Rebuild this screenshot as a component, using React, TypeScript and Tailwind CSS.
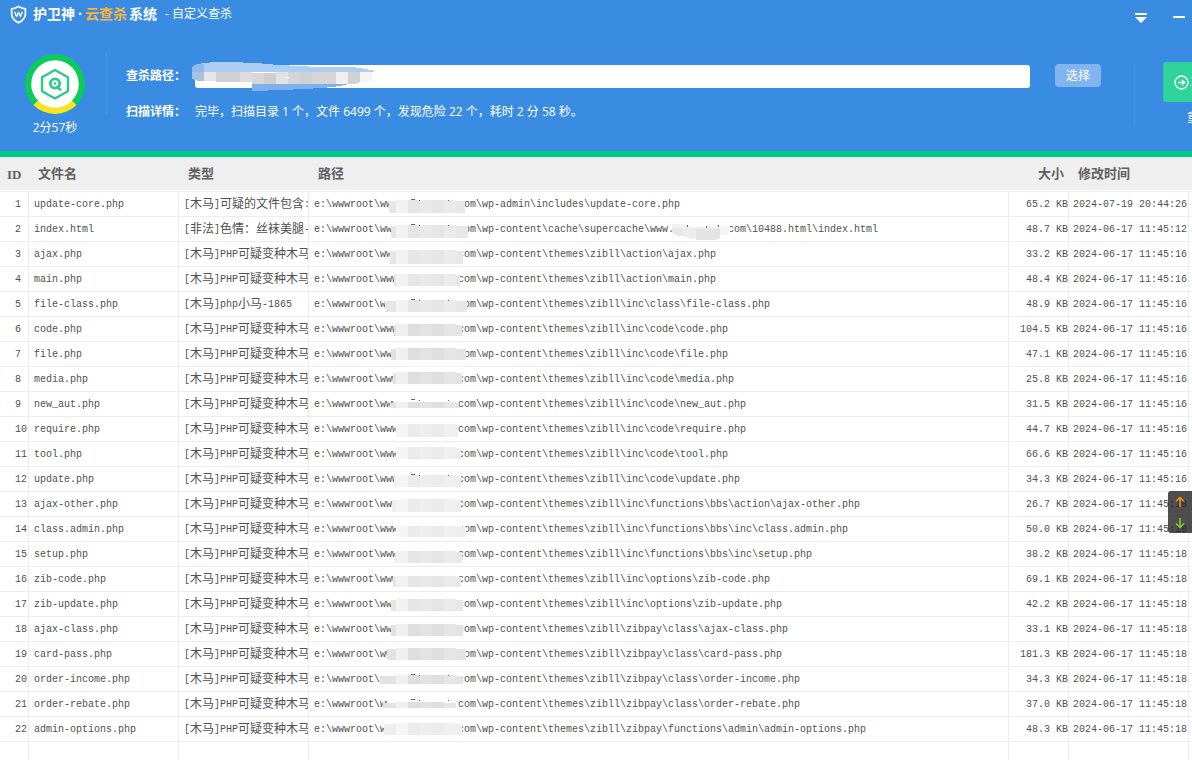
import { Fragment } from "react";

type Blur = {
  x0: number;
  x1: number;
  y0: number;
  y1: number;
  tone: "light" | "mid" | "dark";
  ticks?: boolean;
};

type Threat = {
  name: string;
  type: string;
  path: string;
  size: string;
  time: string;
  blur: Blur;
};

const VARIANT = "[木马]PHP可疑变种木马";
const THEME = "\\wp-content\\themes\\zibll\\";

const threats: Threat[] = [
  { name: "update-core.php", type: "[木马]可疑的文件包含:", path: "\\wp-admin\\includes\\update-core.php", size: "65.2 KB", time: "2024-07-19 20:44:26", blur: { x0: 389, x1: 465, y0: 8, y1: 21, tone: "mid", ticks: true } },
  { name: "index.html", type: "[非法]色情：丝袜美腿-", path: "\\wp-content\\cache\\supercache\\www.|com\\10488.html\\index.html", size: "48.7 KB", time: "2024-06-17 11:45:12", blur: { x0: 391, x1: 468, y0: 8, y1: 21, tone: "mid", ticks: true } },
  { name: "ajax.php", type: VARIANT, path: THEME + "action\\ajax.php", size: "33.2 KB", time: "2024-06-17 11:45:16", blur: { x0: 390, x1: 463, y0: 8, y1: 22, tone: "mid" } },
  { name: "main.php", type: VARIANT, path: THEME + "action\\main.php", size: "48.4 KB", time: "2024-06-17 11:45:16", blur: { x0: 394, x1: 460, y0: 7, y1: 19, tone: "mid" } },
  { name: "file-class.php", type: "[木马]php小马-1865", path: THEME + "inc\\class\\file-class.php", size: "48.9 KB", time: "2024-06-17 11:45:16", blur: { x0: 385, x1: 467, y0: 8, y1: 20, tone: "mid", ticks: true } },
  { name: "code.php", type: VARIANT, path: THEME + "inc\\code\\code.php", size: "104.5 KB", time: "2024-06-17 11:45:16", blur: { x0: 394, x1: 462, y0: 7, y1: 19, tone: "dark" } },
  { name: "file.php", type: VARIANT, path: THEME + "inc\\code\\file.php", size: "47.1 KB", time: "2024-06-17 11:45:16", blur: { x0: 391, x1: 466, y0: 6, y1: 18, tone: "dark" } },
  { name: "media.php", type: VARIANT, path: THEME + "inc\\code\\media.php", size: "25.8 KB", time: "2024-06-17 11:45:16", blur: { x0: 393, x1: 462, y0: 5, y1: 17, tone: "dark" } },
  { name: "new_aut.php", type: VARIANT, path: THEME + "inc\\code\\new_aut.php", size: "31.5 KB", time: "2024-06-17 11:45:16", blur: { x0: 390, x1: 459, y0: 10, y1: 16, tone: "dark", ticks: true } },
  { name: "require.php", type: VARIANT, path: THEME + "inc\\code\\require.php", size: "44.7 KB", time: "2024-06-17 11:45:16", blur: { x0: 396, x1: 458, y0: 7, y1: 20, tone: "light" } },
  { name: "tool.php", type: VARIANT, path: THEME + "inc\\code\\tool.php", size: "66.6 KB", time: "2024-06-17 11:45:16", blur: { x0: 396, x1: 461, y0: 5, y1: 17, tone: "light" } },
  { name: "update.php", type: VARIANT, path: THEME + "inc\\code\\update.php", size: "34.3 KB", time: "2024-06-17 11:45:16", blur: { x0: 394, x1: 461, y0: 8, y1: 20, tone: "light", ticks: true } },
  { name: "ajax-other.php", type: VARIANT, path: THEME + "inc\\functions\\bbs\\action\\ajax-other.php", size: "26.7 KB", time: "2024-06-17 11:45:18", blur: { x0: 392, x1: 461, y0: 7, y1: 20, tone: "light" } },
  { name: "class.admin.php", type: VARIANT, path: THEME + "inc\\functions\\bbs\\inc\\class.admin.php", size: "50.0 KB", time: "2024-06-17 11:45:18", blur: { x0: 396, x1: 466, y0: 9, y1: 20, tone: "light" } },
  { name: "setup.php", type: VARIANT, path: THEME + "inc\\functions\\bbs\\inc\\setup.php", size: "38.2 KB", time: "2024-06-17 11:45:18", blur: { x0: 395, x1: 462, y0: 9, y1: 21, tone: "mid" } },
  { name: "zib-code.php", type: VARIANT, path: THEME + "inc\\options\\zib-code.php", size: "69.1 KB", time: "2024-06-17 11:45:18", blur: { x0: 393, x1: 461, y0: 9, y1: 20, tone: "mid" } },
  { name: "zib-update.php", type: VARIANT, path: THEME + "inc\\options\\zib-update.php", size: "42.2 KB", time: "2024-06-17 11:45:18", blur: { x0: 391, x1: 463, y0: 7, y1: 19, tone: "mid" } },
  { name: "ajax-class.php", type: VARIANT, path: THEME + "zibpay\\class\\ajax-class.php", size: "33.1 KB", time: "2024-06-17 11:45:18", blur: { x0: 391, x1: 463, y0: 7, y1: 19, tone: "dark" } },
  { name: "card-pass.php", type: VARIANT, path: THEME + "zibpay\\class\\card-pass.php", size: "181.3 KB", time: "2024-06-17 11:45:18", blur: { x0: 387, x1: 466, y0: 6, y1: 18, tone: "dark" } },
  { name: "order-income.php", type: VARIANT, path: THEME + "zibpay\\class\\order-income.php", size: "34.3 KB", time: "2024-06-17 11:45:18", blur: { x0: 380, x1: 463, y0: 8, y1: 17, tone: "dark", ticks: true } },
  { name: "order-rebate.php", type: VARIANT, path: THEME + "zibpay\\class\\order-rebate.php", size: "37.0 KB", time: "2024-06-17 11:45:18", blur: { x0: 383, x1: 456, y0: 10, y1: 16, tone: "dark", ticks: true } },
  { name: "admin-options.php", type: VARIANT, path: THEME + "zibpay\\functions\\admin\\admin-options.php", size: "48.3 KB", time: "2024-06-17 11:45:18", blur: { x0: 384, x1: 462, y0: 6, y1: 18, tone: "light" } },
];

const tones = {
  light: ["#eeeeee", "#f5f5f5", "#ebebeb", "#eeeeee", "#ebebeb", "#f0f0f0", "#eeeeee", "#f4f4f4"],
  mid: ["#e6e6e6", "#f2f2f2", "#e6e6e6", "#e9e9e9", "#e5e5e5", "#ebebeb", "#e7e7e7", "#efefef"],
  dark: ["#e2e2e2", "#f0f0f0", "#dedede", "#e3e3e3", "#dfdfdf", "#e6e6e6", "#e3e3e3", "#ececec"],
};

// pixelated patch that hides the site's domain
const DomainBlur = ({ blur }: { blur: Blur }) => {
  const { x0, x1, y0, y1 } = blur;
  return (
    <span className="relative h-6 w-[60px] shrink-0">
      <svg className="absolute -left-5 top-0" width="92" height="24" viewBox="378 0 92 24" shapeRendering="crispEdges">
        <rect x={x0 + 4} y={y0 - 1} width={x1 - x0 - 8} height={y1 - y0 + 3} fill="#fdfdfd" />
        {tones[blur.tone].map((fill, i) => {
          const left = Math.max(x0, i === 0 ? 378 : 384 + i * 12);
          const right = Math.min(x1, 396 + i * 12);
          if (right <= left) return null;
          const edge = i === 0 || right === x1 ? 1 : 0;
          return <rect key={i} x={left} y={y0 + edge} width={right - left} height={y1 - y0 - edge} fill={fill} />;
        })}
        {blur.ticks && <path d="M411 7h4v1h-4zM419 8h1v1h-1zM448 8h1v1h-1z" fill="#666" />}
      </svg>
    </span>
  );
};

const CacheBlur = () => (
  <span className="relative h-6 w-[54px] shrink-0">
    <svg className="absolute -left-1 top-0" width="64" height="24" viewBox="670 0 64 24" shapeRendering="crispEdges">
      <path d="M672 7h10l8 3h32l-2 5h-48z" fill="#f0f0f0" />
      <path d="M672 11h12v8h-6l-6-3z" fill="#e8e8e8" />
      <path d="M684 11h12v11h-6l-6-3z" fill="#ededed" />
      <path d="M696 12h24v9l-4 2h-20z" fill="#e3e3e3" />
      <path d="M720 9h10v5l-4 4h-6z" fill="#f3f3f3" />
      <path d="M687 8h1v2h-1zM706 9h1v2h-1zM718 8h1v2h-1z" fill="#666" />
    </svg>
  </span>
);

// latin sits on a 6px grid, chinese on a 12px one
const MixedText = ({ text }: { text: string }) => (
  <div className="flex h-6 items-center">
    {text.split(/([\u3000-\u9fff\uff00-\uffef]+)/).map((part, i) =>
      i % 2 ? (
        <span key={i} className="shrink-0 pt-0.5 text-[12px] leading-4">
          {part}
        </span>
      ) : (
        <Fragment key={i}>{part}</Fragment>
      )
    )}
  </div>
);

const ShieldLogo = () => (
  <svg width="17" height="19" viewBox="0 0 17 19" fill="none" stroke="#fff" strokeLinejoin="round">
    <path d="M8.500 1.300C6.800 2.700 4.500 3.600 1.600 3.800v4.700c0 4.200 2.600 7.200 6.900 9.300 4.300-2.100 6.900-5.100 6.900-9.300V3.800C12.500 3.600 10.200 2.700 8.500 1.300z" strokeWidth="1.700" />
    <path d="M4.600 6.800l1.900 4.800 2-4.200 2 4.200 1.900-4.800" strokeWidth="1.300" />
  </svg>
);

const ScanRing = () => (
  <svg width="60" height="60" viewBox="0 0 60 60" fill="none">
    <circle cx="30" cy="30" r="30" fill="#0ccb5a" />
    <path d="M30 30L8.500 50.900A30 30 0 0 0 51.500 50.900z" fill="#fbe31d" />
    <circle cx="30" cy="30" r="23.800" fill="#fff" />
    <path d="M30 16l13 7.200v14L30 44.500l-13-7.300v-14z" stroke="#2fc987" strokeWidth="2.400" strokeLinejoin="round" />
    <circle cx="30" cy="29.500" r="4.700" stroke="#2fc987" strokeWidth="2.800" />
    <circle cx="30" cy="29.500" r="1.300" fill="#2fc987" />
    <path d="M31.500 32l4.300 4.300" stroke="#2fc987" strokeWidth="2.400" />
  </svg>
);

const PathBlur = () => (
  <svg className="pointer-events-none absolute -left-[3px] -top-[3px]" width="186" height="30" viewBox="192 62 186 30" shapeRendering="crispEdges">
    <path d="M192 67l5-3 7-1 12-1h20l14 1 23 1v1h17v1l38 1h24l14 2 9 2-3 1H204v6h-12z" fill="#accdf4" />
    <path d="M192 67l5-3h7v8h-12z" fill="#8bb9f0" />
    <path d="M192 72h12v9h-6l-6-2z" fill="#a9c0df" />
    <path d="M204 72h12v9h-12z" fill="#e6e6e6" />
    <path d="M216 72h24v10h-24z" fill="#d1d1d1" />
    <path d="M240 72h12v10h-12z" fill="#dcdcdc" />
    <path d="M252 73h12v11h-12z" fill="#d7d7d7" />
    <path d="M264 73h12v11h-12z" fill="#cfcfcf" />
    <path d="M276 72h12v12h-12z" fill="#e2e2e2" />
    <path d="M288 72h12v12h-12z" fill="#d5d5d5" />
    <path d="M300 72h12v12h-12z" fill="#d0d0d0" />
    <path d="M312 72h24v12h-24z" fill="#d6d6d6" />
    <path d="M336 72h12v12h-12z" fill="#efefef" />
    <path d="M348 72h12v10l-6 2h-6z" fill="#d1d1d1" />
    <path d="M360 72h12v8l-6 2h-6z" fill="#f5f5f5" />
    <path d="M252 84h97l-9 2-17 2-21 1-18 1-32 1z" fill="#7eb0ec" />
    <path d="M285 77h4v1h-4z" fill="#fff" />
  </svg>
);

const headCell = "h-[35px] border-b border-[#efefef] bg-[#efefef] pt-0.5 pb-0 text-left font-bold shadow-[inset_0_-1px_#fff]";
const bodyCell = "h-[25px] overflow-hidden whitespace-nowrap border-b border-r border-[#ededed] p-0";
const emptyCell = "h-[25px] border-r border-[#ededed] p-0";

export default function App() {
  return (
    <div className="relative flex h-screen flex-col overflow-hidden bg-white text-[12px] font-['Liberation_Mono','Noto_Sans_CJK_SC',monospace]">
      <header className="shrink-0 border-b-[6px] border-[#05ca85] bg-[#3a8ce2] text-white font-['Open_Sans','Noto_Sans_CJK_SC',sans-serif]">
        <div className="flex h-7 items-center pl-[10px] pr-[7px]">
          <ShieldLogo />
          <h1 className="ml-1.5 flex gap-px text-[14px] font-bold leading-5">
            <span>护卫神</span>
            <span className="flex w-2 justify-center">·</span>
            <span className="text-[#f9b43c]">云查杀</span>
            <span className="pl-px">系统</span>
          </h1>
          <span className="ml-2 leading-5">- 自定义查杀</span>
          <div className="ml-auto flex items-center gap-[26px] pt-2">
            <button aria-label="菜单">
              <svg width="12" height="10" viewBox="0 0 12 10" fill="#fff">
                <path d="M0 0h12v2H0zM0 4h12L6 10z" />
              </svg>
            </button>
            <button aria-label="最小化">
              <svg width="12" height="10" viewBox="0 0 12 10" fill="#fff">
                <path d="M0 3h12v2H0z" />
              </svg>
            </button>
          </div>
        </div>

        <div className="flex h-[123px] pl-[25px] pt-6">
          <div className="flex shrink-0 flex-col items-center pt-0.5">
            <ScanRing />
            <span className="mt-1 leading-5">2分57秒</span>
          </div>
          <div className="ml-[21px] h-[62px] w-px shrink-0 bg-[#4c97e5]" />

          <div className="ml-[19px] flex min-w-0 flex-1 flex-col pt-3">
            <div className="flex h-6 items-center">
              <label htmlFor="scan-path" className="w-[69px] shrink-0 font-bold">
                查杀路径：
              </label>
              <div className="relative mt-px min-w-0 flex-1">
                <input id="scan-path" type="text" className="block h-[23px] w-full rounded-[3px] bg-white px-2 text-[#666] outline-none" />
                <PathBlur />
              </div>
              <button className="ml-[25px] h-[23px] w-[46px] shrink-0 self-start rounded-[4px] bg-[#82b5ee] text-[12px]">选择</button>
            </div>
            <div className="mt-3 flex h-6 items-center whitespace-nowrap">
              <span className="w-[69px] shrink-0 font-bold">扫描详情：</span>
              <span>完毕，扫描目录 1 个，文件 6499 个，发现危险 22 个，耗时 2 分 58 秒。</span>
            </div>
          </div>

          <div className="ml-[33px] mt-3 h-[62px] w-px shrink-0 bg-[#4391e4]" />
          <div className="ml-7 w-[29px] shrink-0 overflow-hidden pt-2.5">
            <button className="flex h-10 w-[120px] items-center rounded-[3px] bg-[#2fd49a] pl-[11px]">
              <svg width="15" height="15" viewBox="0 0 15 15" fill="none" stroke="#fff" strokeWidth="1.400">
                <circle cx="7.500" cy="7.500" r="6.500" />
                <path d="M4.500 7.500h5.500M8 5l2.500 2.500L8 10" />
              </svg>
              <span className="pl-px">立</span>
            </button>
            <a href="#" className="ml-6 mt-1.5 block w-24 leading-5">
              重
            </a>
          </div>
        </div>
      </header>

      <table className="w-full table-fixed border-separate border-spacing-0 text-[10px] text-[#505050]">
        <colgroup>
          <col className="w-[29px]" />
          <col className="w-[150px]" />
          <col className="w-[130px]" />
          <col />
          <col className="w-[60px]" />
          <col className="w-[120px]" />
          <col className="w-[3px]" />
        </colgroup>
        <thead className="text-[13px] text-[#606060]">
          <tr>
            <th className={`${headCell} pl-[7px] pr-0 font-['Liberation_Serif',serif]`}>ID</th>
            <th className={`${headCell} pl-[9px]`}>文件名</th>
            <th className={`${headCell} pl-[9px]`}>类型</th>
            <th className={`${headCell} pl-[9px]`}>路径</th>
            <th className={`${headCell} pr-[5px] text-right!`}>大小</th>
            <th className={`${headCell} pl-[9px]`}>修改时间</th>
            <th className={`${headCell} px-0`} />
          </tr>
        </thead>
        <tbody>
          {threats.map((item, i) => {
            const [before, after] = item.path.split("|");
            return (
              <tr key={item.name}>
                <td className={`${bodyCell} pl-[15px]!`}>{i + 1}</td>
                <td className={`${bodyCell} pl-[5px]!`}>{item.name}</td>
                <td className={`${bodyCell} pl-[5px]!`}>
                  <MixedText text={item.type} />
                </td>
                <td className={`${bodyCell} pl-[5px]!`}>
                  <div className="flex h-6 items-center">
                    <span>e:\wwwroot\www</span>
                    <DomainBlur blur={item.blur} />
                    <span>com{before}</span>
                    {after && (
                      <>
                        <CacheBlur />
                        <span>{after}</span>
                      </>
                    )}
                  </div>
                </td>
                <td className={`${bodyCell} text-right`}>{item.size}</td>
                <td className={`${bodyCell} pl-1!`}>{item.time}</td>
                <td className="border-b border-[#ededed] p-0" />
              </tr>
            );
          })}
          <tr>
            <td className={emptyCell} />
            <td className={emptyCell} />
            <td className={emptyCell} />
            <td className={emptyCell} />
            <td className={emptyCell} />
            <td className={emptyCell} />
            <td />
          </tr>
        </tbody>
      </table>

      {/* upload / download speed widget */}
      <div className="absolute right-0 top-[491px] flex h-[42px] w-6 flex-col items-center justify-around rounded-l-[3px] bg-[#222]/80">
        <svg width="10" height="12" viewBox="0 0 10 12" fill="none" stroke="#f7941d" strokeWidth="1.500">
          <path d="M5 11V1.500M1 5.500l4-4 4 4" />
        </svg>
        <svg width="10" height="12" viewBox="0 0 10 12" fill="none" stroke="#7ed321" strokeWidth="1.500">
          <path d="M5 1v9.500M1 6.500l4 4 4-4" />
        </svg>
      </div>
    </div>
  );
}
